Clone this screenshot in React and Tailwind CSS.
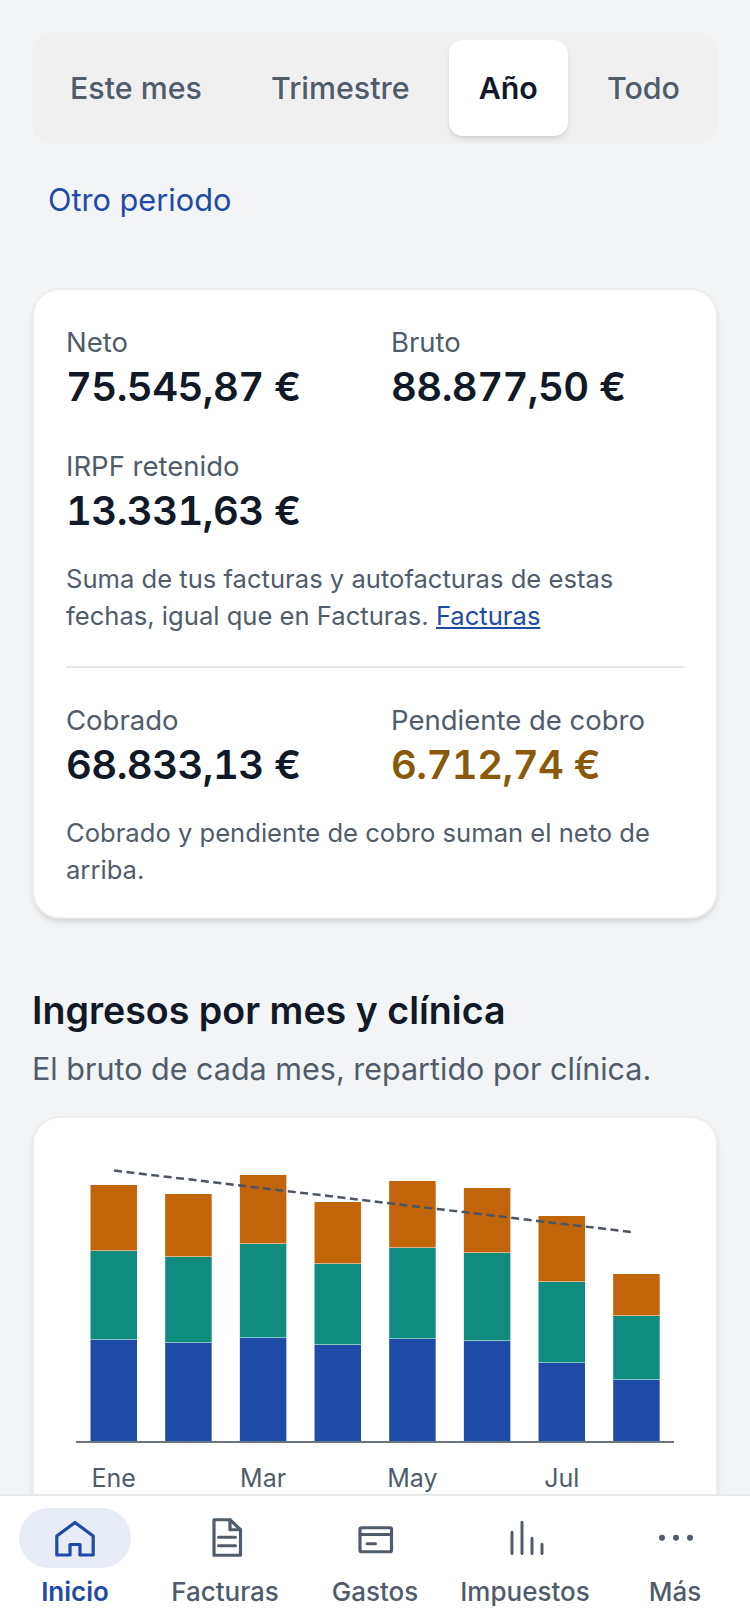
const font = { fontFamily: 'Inter, sans-serif' };

const tabs = ['Este mes', 'Trimestre', 'Año', 'Todo'];

// tops of each stack, local to the chart card: top, orange/teal, teal/blue
const bars = [
  [67, 133, 222],
  [76, 139, 225],
  [57, 126, 220],
  [84, 146, 227],
  [63, 130, 221],
  [70, 135, 223],
  [98, 164, 245],
  [156, 198, 262],
];
const baseline = 324;

function Stat({ label, value, amber }) {
  return (
    <div>
      <div className="text-[27.5px] leading-[36px] text-[#515c6b]">{label}</div>
      <div className={`text-[40px] leading-[54px] font-semibold tracking-[-0.55px] tabular-nums ${amber ? 'text-[#8a5a0b]' : 'text-[#111827]'}`}>{value}</div>
    </div>
  );
}

function Chart() {
  return (
    <svg width="682" height="420" viewBox="0 0 682 420" className="block">
      {bars.map((b, i) => {
        const x = 56.5 + 74.67 * i;
        return (
          <g key={i}>
            <rect x={x} y={b[0]} width="46.5" height={b[1] - b[0] - 0.5} fill="#c2640a" />
            <rect x={x} y={b[1]} width="46.5" height={b[2] - b[1] - 0.5} fill="#0f8c7e" />
            <rect x={x} y={b[2]} width="46.5" height={baseline - b[2]} fill="#1e4ba8" />
          </g>
        );
      })}
      <line x1="42" y1={baseline} x2="640" y2={baseline} stroke="#6b7280" strokeWidth="2" />
      <line x1="80" y1="52.5" x2="601" y2="114.5" stroke="#4b5563" strokeWidth="2.5" strokeDasharray="8 4.5" />
      {[['Ene', 0], ['Mar', 2], ['May', 4], ['Jul', 6]].map(([t, i]) => (
        <text key={t} x={79.75 + 74.67 * i} y="369" textAnchor="middle" fontSize="25" fill="#515c6b" style={font}>{t}</text>
      ))}
    </svg>
  );
}

function NavIcon({ children, color }) {
  return (
    <svg width="48" height="48" viewBox="0 0 48 48" fill="none" stroke={color} strokeWidth="3.2" strokeLinejoin="round" strokeLinecap="round">
      {children}
    </svg>
  );
}

const gray = '#515c6b';
const navItems = [
  {
    label: 'Inicio',
    active: true,
    icon: <path d="M24 8.5 L42.2 22 V41 H29 V30.5 H19 V41 H5.8 V22 Z" />,
  },
  {
    label: 'Facturas',
    icon: (
      <>
        <path d="M13 5.75 H29 L39.5 15.75 V41.25 H13 Z" />
        <path d="M29 5.75 V15.75 H39.5" />
        <path d="M17.5 23.3 H34.5 M17.5 31.7 H34.5" strokeWidth="3" />
      </>
    ),
  },
  {
    label: 'Gastos',
    icon: (
      <>
        <rect x="9" y="13.75" width="31.5" height="24" rx="1.5" />
        <path d="M9 20.5 H40.5" strokeWidth="3" />
        <path d="M16 29.7 H24.5" strokeWidth="3" />
      </>
    ),
  },
  {
    label: 'Impuestos',
    icon: <path d="M11 18.2 V39.5 M21 8.2 V39.5 M31 24.2 V39.5 M41 30.2 V39.5" strokeWidth="3" />,
  },
  {
    label: 'Más',
    icon: (
      <>
        <circle cx="11" cy="23.7" r="3" fill={gray} stroke="none" />
        <circle cx="25" cy="23.7" r="3" fill={gray} stroke="none" />
        <circle cx="39" cy="23.7" r="3" fill={gray} stroke="none" />
      </>
    ),
  },
];

export default function App() {
  return (
    <div className="flex flex-col h-[1624px] w-[750px] overflow-hidden bg-[#f3f4f6]" style={font}>
      <main className="flex-1 min-h-0 overflow-hidden px-8 pt-8">
        <div className="flex justify-between h-28 p-2 rounded-[20px] bg-[#f0f0f1]">
          {tabs.map((t) => (
            <div
              key={t}
              className={`flex items-center justify-center px-[30px] pt-[2px] rounded-[14px] text-[30.4px] ${
                t === 'Año' ? 'bg-white font-semibold text-[#111827] shadow-md' : 'font-medium text-[#515c6b]'
              }`}
            >
              {t}
            </div>
          ))}
        </div>

        <div className="mt-9 px-4 text-[30.7px] leading-10 text-[#1e4ba8]">Otro periodo</div>

        <section className="mt-[68px] rounded-[28px] border-2 border-[#eeeef0] bg-white px-8 pt-[34px] pb-[29px] shadow-md">
          <div className="grid grid-cols-2 gap-x-8 gap-y-[34px]">
            <Stat label="Neto" value="75.545,87 €" />
            <Stat label="Bruto" value="88.877,50 €" />
            <Stat label="IRPF retenido" value="13.331,63 €" />
          </div>
          <p className="mt-[22px] text-[25.6px] leading-[37px] text-[#515c6b]">
            Suma de tus facturas y autofacturas de estas fechas, igual que en Facturas.{' '}
            <span className="text-[#1e4ba8] underline">Facturas</span>
          </p>
          <div className="mt-8 border-t-2 border-[#e5e7eb]" />
          <div className="mt-[34px] grid grid-cols-2 gap-x-8">
            <Stat label="Cobrado" value="68.833,13 €" />
            <Stat label="Pendiente de cobro" value="6.712,74 €" amber />
          </div>
          <p className="mt-[22px] text-[25.6px] leading-[37px] text-[#515c6b]">
            Cobrado y pendiente de cobro suman el neto de arriba.
          </p>
        </section>

        <h2 className="mt-[68px] text-[37.6px] leading-[48px] font-semibold text-[#111827]">Ingresos por mes y clínica</h2>
        <p className="mt-[14px] text-[30.5px] leading-10 text-[#515c6b]">El bruto de cada mes, repartido por clínica.</p>

        <section className="mt-[27px] rounded-t-[28px] border-2 border-[#eeeef0] bg-white shadow-md">
          <Chart />
        </section>
      </main>

      <nav className="grid grid-cols-5 h-[130px] shrink-0 border-t-2 border-[#e8e9ec] bg-white">
        {navItems.map((item) => (
          <div key={item.label} className="flex flex-col items-center pt-3">
            <div className={`flex items-center justify-center w-28 h-[60px] rounded-full ${item.active ? 'bg-[#e8ecf6]' : ''}`}>
              <NavIcon color={item.active ? '#1e4ba8' : gray}>{item.icon}</NavIcon>
            </div>
            <span className={`mt-2 text-[26px] leading-8 ${item.active ? 'font-semibold text-[#1e4ba8]' : 'font-medium text-[#515c6b]'}`}>
              {item.label}
            </span>
          </div>
        ))}
      </nav>
    </div>
  );
}
